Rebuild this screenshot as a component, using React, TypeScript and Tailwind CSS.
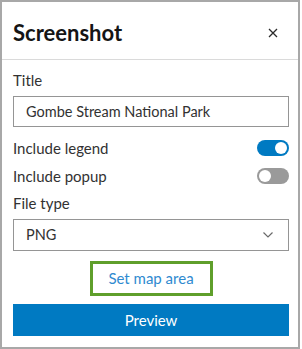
import React from "react";

function Toggle({ on }: { on: boolean }) {
  return (
    <div
      className={`relative w-[32px] h-[16px] rounded-full ${on ? "bg-[#007ac2]" : "bg-[#9a9a9a]"}`}
    >
      <div
        className={`absolute top-[2px] w-[12px] h-[12px] rounded-full bg-white ${on ? "left-[18px]" : "left-[2px]"}`}
      />
    </div>
  );
}

export default function App() {
  return (
    <div
      className="w-[300px] h-[349px] border-2 border-[#a8a8a8] bg-white flex flex-col"
      style={{ fontFamily: "Lato, 'Open Sans', sans-serif" }}
    >
      <div className="h-[58px] border-b border-[#dadada] flex items-center pl-[11px] pr-[20px] justify-between">
        <div className="text-[22px] font-bold text-[#151515] leading-none pt-[4px]">Screenshot</div>
        <svg width="10" height="10" viewBox="0 0 10 10" className="mt-[4px]">
          <path d="M1 1 L9 9 M9 1 L1 9" stroke="#2b2b2b" strokeWidth="1.3" />
        </svg>
      </div>
      <div className="pl-[11px] pr-[9px] flex flex-col">
        <div className="mt-[10px] h-[20px] flex items-center text-[15px] text-[#323232]">Title</div>
        <div className="mt-[6px] h-[31px] border border-[#959595] flex items-center px-[12px] text-[14.5px] text-[#323232]">
          Gombe Stream National Park
        </div>
        <div className="mt-[9px] h-[24px] flex items-center justify-between text-[15px] text-[#323232]">
          <span>Include legend</span>
          <Toggle on />
        </div>
        <div className="mt-[4px] h-[24px] flex items-center justify-between text-[15px] text-[#323232]">
          <span>Include popup</span>
          <Toggle on={false} />
        </div>
        <div className="mt-[5px] h-[20px] flex items-center text-[15px] text-[#323232]">File type</div>
        <div className="mt-[6px] h-[32px] border border-[#959595] flex items-center justify-between pl-[12px] pr-[15px] text-[14.5px] text-[#323232]">
          <span>PNG</span>
          <svg width="10" height="6" viewBox="0 0 10 6">
            <path d="M0.5 0.5 L5 5 L9.5 0.5" fill="none" stroke="#6a6a6a" strokeWidth="1.2" />
          </svg>
        </div>
        <div className="mt-[10px] flex justify-center">
          <div className="w-[123px] h-[35px] border-[3px] border-[#5f9f2b] flex items-center justify-center text-[15px] text-[#2f8ad0]">
            Set map area
          </div>
        </div>
        <div className="mt-[8px] h-[32px] bg-[#007ac2] flex items-center justify-center text-[15px] text-white">
          Preview
        </div>
      </div>
    </div>
  );
}
